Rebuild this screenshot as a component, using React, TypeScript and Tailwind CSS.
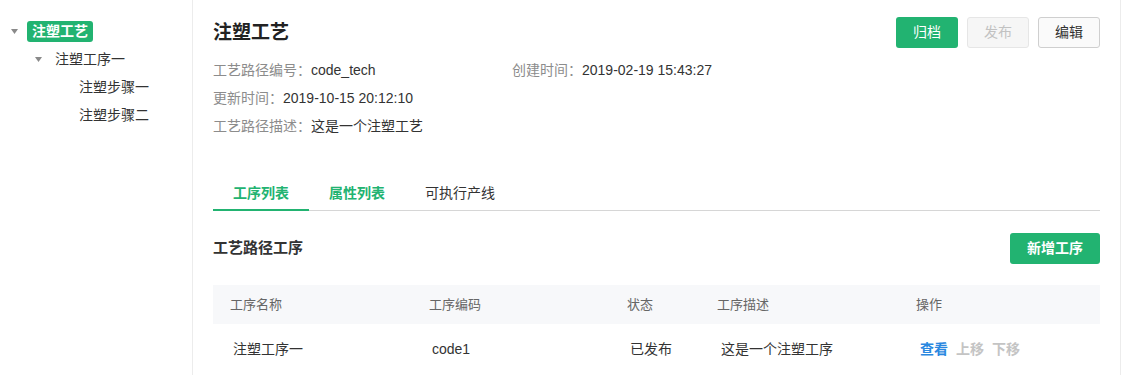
import { useState } from 'react';

const GREEN = 'bg-[#22b371]';

interface StepRow {
  name: string;
  code: string;
  status: string;
  desc: string;
}

const rows: StepRow[] = [
  { name: '注塑工序一', code: 'code1', status: '已发布', desc: '这是一个注塑工序' },
];

function Caret() {
  return (
    <svg width="7" height="5" viewBox="0 0 7 5" className="shrink-0">
      <path d="M0 0h7L3.5 5z" fill="#8a8a8a" />
    </svg>
  );
}

function Tree() {
  return (
    <div className="w-[193px] shrink-0 border-r border-[#ececec] pt-[17px] text-[14px] text-[#333]">
      {/* root */}
      <div className="flex h-[28px] items-center pl-[11px]">
        <Caret />
        <span className={`ml-[9px] rounded-[3px] ${GREEN} px-[5px] leading-[21px] font-semibold text-white`}>
          注塑工艺
        </span>
      </div>
      {/* level 2 */}
      <div className="flex h-[28px] items-center pl-[35px]">
        <Caret />
        <span className="ml-[13px]">注塑工序一</span>
      </div>
      {/* level 3 */}
      <div className="flex h-[28px] items-center pl-[79px]">注塑步骤一</div>
      <div className="flex h-[28px] items-center pl-[79px]">注塑步骤二</div>
    </div>
  );
}

export default function App() {
  const [tab, setTab] = useState(0);
  const tabs = ['工序列表', '属性列表', '可执行产线'];

  return (
    <div
      className="flex h-[375px] w-[1123px] overflow-hidden bg-white"
      style={{ fontFamily: '"Liberation Sans", "Noto Sans CJK SC", sans-serif' }}
    >
      <Tree />

      <div className="w-[928px] shrink-0 border-r border-[#ececec] px-5 pt-[17px]">
        {/* Header */}
        <div className="flex items-start justify-between">
          <h1 className="text-[19px] font-semibold leading-[31px] text-[#222]">注塑工艺</h1>
          <div className="flex gap-[9px] text-[14px]">
            <button className={`h-[31px] w-[62px] rounded-[3px] ${GREEN} text-white`}>归档</button>
            <button className="h-[31px] w-[62px] rounded-[3px] border border-[#e6e6e6] bg-[#f6f6f6] text-[#c2c2c2]">
              发布
            </button>
            <button className="h-[31px] w-[62px] rounded-[3px] border border-[#cfcfcf] bg-[#fafafa] text-[#333]">
              编辑
            </button>
          </div>
        </div>

        {/* Meta */}
        <div className="mt-2 grid grid-cols-[299px_1fr] text-[14px] leading-[28px]">
          <div>
            <span className="text-[#8c8c8c]">工艺路径编号：</span>
            <span className="text-[#333]">code_tech</span>
          </div>
          <div>
            <span className="text-[#8c8c8c]">创建时间：</span>
            <span className="text-[#333]">2019-02-19 15:43:27</span>
          </div>
          <div className="col-span-2">
            <span className="text-[#8c8c8c]">更新时间：</span>
            <span className="text-[#333]">2019-10-15 20:12:10</span>
          </div>
          <div className="col-span-2">
            <span className="text-[#8c8c8c]">工艺路径描述：</span>
            <span className="text-[#333]">这是一个注塑工艺</span>
          </div>
        </div>

        {/* Tabs */}
        <div className="mt-[38px] flex border-b border-[#d6d6d6] text-[14px]">
          {tabs.map((t, i) => (
            <button
              key={t}
              onClick={() => setTab(i)}
              className={`-mb-px h-[33px] border-b-2 px-5 ${
                tab === i ? 'border-[#22b371] font-semibold text-[#22b371]' : 'border-transparent'
              } ${i === 1 && tab !== 1 ? 'font-semibold text-[#22b371]' : ''} ${
                i === 2 && tab !== 2 ? 'text-[#333]' : ''
              }`}
            >
              {t}
            </button>
          ))}
        </div>

        {/* Section */}
        <div className="mt-[22px] flex items-center justify-between">
          <h2 className="text-[15px] font-semibold text-[#333]">工艺路径工序</h2>
          <button className={`h-[31px] w-[90px] rounded-[3px] ${GREEN} text-[14px] font-semibold text-white`}>
            新增工序
          </button>
        </div>

        {/* Table */}
        <div className="mt-[21px] text-[14px]">
          <div className="grid h-[39px] grid-cols-[199px_198px_90px_199px_1fr] items-center bg-[#f7f8fa] text-[13px] text-[#666]">
            <div className="pl-[17px]">工序名称</div>
            <div className="pl-[17px]">工序编码</div>
            <div className="pl-[17px]">状态</div>
            <div className="pl-[17px]">工序描述</div>
            <div className="pl-[17px]">操作</div>
          </div>
          {rows.map((r) => (
            <div
              key={r.code}
              className="grid h-[50px] grid-cols-[199px_198px_90px_199px_1fr] items-center text-[#333]"
            >
              <div className="pl-[20px]">{r.name}</div>
              <div className="pl-[20px]">{r.code}</div>
              <div className="pl-[20px]">{r.status}</div>
              <div className="pl-[21px]">{r.desc}</div>
              <div className="flex gap-[8px] pl-[21px] font-semibold">
                <span className="text-[#2a88e0]">查看</span>
                <span className="text-[#c4c4c4]">上移</span>
                <span className="text-[#c4c4c4]">下移</span>
              </div>
            </div>
          ))}
        </div>
      </div>
    </div>
  );
}
